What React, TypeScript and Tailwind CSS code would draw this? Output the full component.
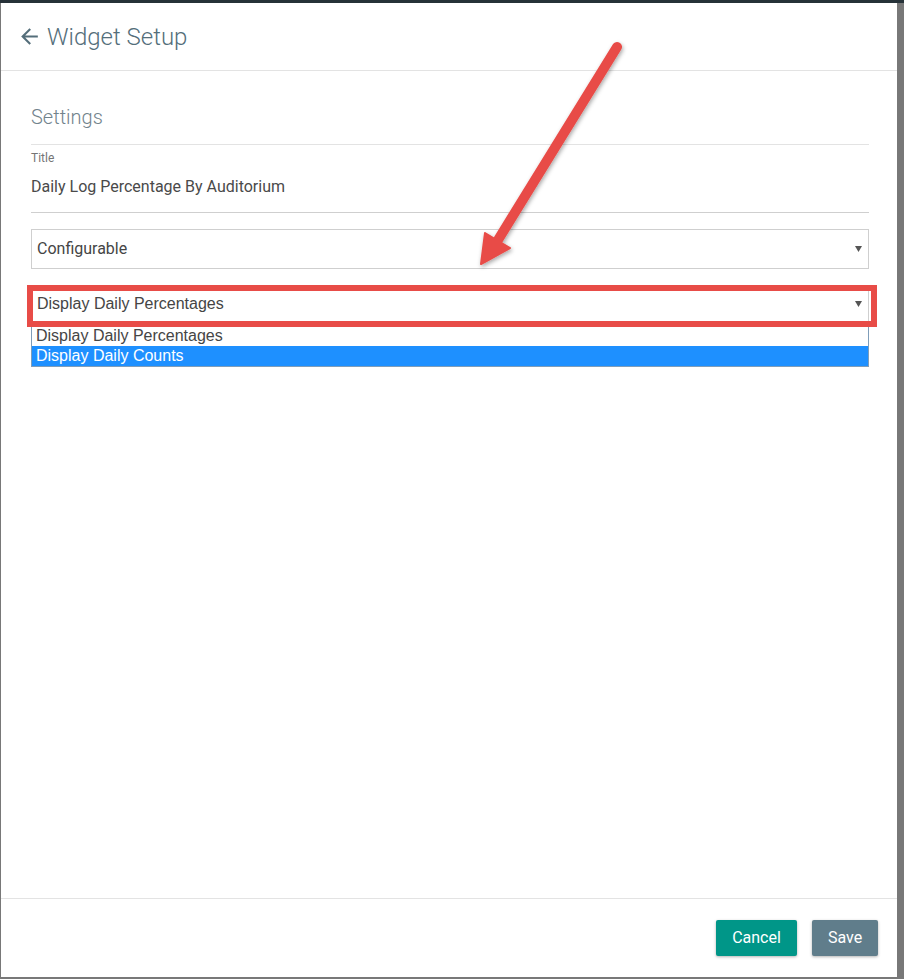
import type { ReactNode } from "react";

const options = ["Display Daily Percentages", "Display Daily Counts"];

function Caret() {
  return (
    <svg width="7" height="6" viewBox="0 0 7 6" className="shrink-0">
      <path d="M0 0h7L3.5 6z" fill="#555" />
    </svg>
  );
}

function SelectBox({ children, className = "" }: { children: ReactNode; className?: string }) {
  return (
    <div
      className={`flex items-center justify-between border border-[#cfcfcf] bg-white pl-[5px] pr-[6px] ${className}`}
    >
      {children}
      <Caret />
    </div>
  );
}

// Callout arrow drawn on top of the dialog
function Callout() {
  return (
    <svg
      className="pointer-events-none absolute left-0 top-0"
      width="904"
      height="979"
      viewBox="0 0 904 979"
    >
      <defs>
        <filter id="soft" x="-20%" y="-20%" width="140%" height="140%">
          <feDropShadow dx="1" dy="2" stdDeviation="2" floodColor="#000" floodOpacity="0.35" />
        </filter>
      </defs>
      <g filter="url(#soft)" fill="#e84c47" stroke="#e84c47">
        <line x1="617" y1="47" x2="498" y2="240" strokeWidth="10" strokeLinecap="round" />
        <polygon points="481,264 485,233 510,248" strokeWidth="2" strokeLinejoin="round" />
      </g>
    </svg>
  );
}

export default function App() {
  return (
    <div className="relative h-[979px] w-[904px] overflow-hidden bg-[#787878] font-['Roboto',sans-serif]">
      <div className="h-[3px] bg-[#263238]" />
      <div className="ml-[1px] flex h-[974px] w-[896px] flex-col bg-white">
        {/* Header */}
        <div className="flex h-[68px] items-center border-b border-[#e3e3e3] pl-[16px]">
          <svg width="25" height="25" viewBox="0 0 24 24" className="mr-[5px]">
            <path
              d="M20 11H7.83l5.59-5.59L12 4l-8 8 8 8 1.41-1.41L7.83 13H20v-2z"
              fill="#546e7a"
            />
          </svg>
          <h1 className="text-[24px] font-light leading-[32px] text-[#546e7a]">Widget Setup</h1>
        </div>

        {/* Body */}
        <div className="flex-1 pl-[30px] pr-[28px] pt-[34px]">
          <div className="border-b border-[#e3e3e3] pb-[15px]">
            <h2 className="text-[20px] font-light leading-[24px] text-[#72838c]">Settings</h2>
          </div>
          <div className="border-b border-[#cfcfcf] pb-[15px] pt-[5px]">
            <div className="text-[12px] leading-[16px] text-[#757575]">Title</div>
            <div className="mt-[11px] text-[16px] leading-[20px] text-[#4a4a4a]">
              Daily Log Percentage By Auditorium
            </div>
          </div>

          <SelectBox className="mt-[16px] h-[40px]">
            <span className="text-[16px] text-[#454545]">Configurable</span>
          </SelectBox>

          <div className="relative mt-[16px]">
            <SelectBox className="h-[37px]">
              <span className="font-['Liberation_Sans',Arial,sans-serif] text-[16px] text-[#454545]">
                Display Daily Percentages
              </span>
            </SelectBox>
            <div className="-mt-px border border-[#7f9db9] bg-white pt-[4px] font-['Liberation_Sans',Arial,sans-serif] text-[16px] leading-[20px]">
              {options.map((o, i) => (
                <div
                  key={o}
                  className={
                    i === 1 ? "bg-[#1e90ff] pl-[4px] text-white" : "pl-[4px] text-[#454545]"
                  }
                >
                  {o}
                </div>
              ))}
            </div>
            {/* highlight frame around the open select */}
            <span className="pointer-events-none absolute left-[-4px] right-[-8px] top-0 h-[42px] border-[6px] border-[#e84c47]" />
          </div>
        </div>

        {/* Footer */}
        <div className="flex h-[79px] items-start justify-end gap-[15px] border-t border-[#e3e3e3] pr-[19px] pt-[21px]">
          <button className="h-[36px] w-[81px] rounded-[2px] bg-[#009688] text-[16px] text-white shadow-[0_1px_3px_rgba(0,0,0,0.3)]">
            Cancel
          </button>
          <button className="h-[36px] w-[66px] rounded-[2px] bg-[#607d8b] text-[16px] text-white shadow-[0_1px_3px_rgba(0,0,0,0.3)]">
            Save
          </button>
        </div>
      </div>
      <Callout />
    </div>
  );
}
